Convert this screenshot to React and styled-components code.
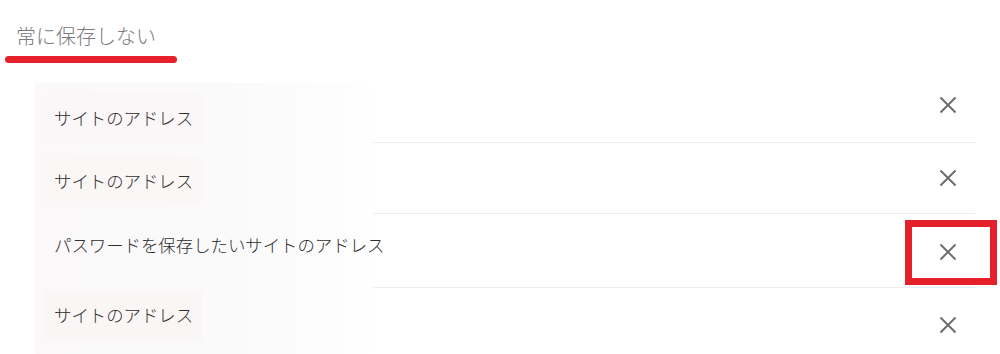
import styled, { createGlobalStyle } from "styled-components";

const GlobalStyle = createGlobalStyle`
  html, body {
    margin: 0;
    padding: 0;
    background: #ffffff;
    overflow: hidden;
  }
  body {
    font-family: "Noto Sans CJK JP", "Noto Sans", sans-serif;
    color: #333333;
  }
`;

const sites = [
  { label: "サイトのアドレス", height: 59, textTop: 10, iconTop: 13, tint: "#fbf7f8" },
  { label: "サイトのアドレス", height: 72, textTop: 14, iconTop: 27, tint: "#fbf7f7" },
  { label: "パスワードを保存したいサイトのアドレス", height: 74, textTop: 6, iconTop: 29, tint: "transparent", highlighted: true },
  { label: "サイトのアドレス", height: 72, textTop: 2, iconTop: 28, tint: "#fbf6f6" },
];

const App = () => {
  return (
    <>
      <GlobalStyle />
      <Page>
        <Header>
          <Title>常に保存しない</Title>
          <Underline />
        </Header>
        <SiteList>
          {sites.map((site, index) => (
            <Row key={index} $height={site.height}>
              <LabelCell>
                <Label $top={site.textTop} $tint={site.tint}>{site.label}</Label>
              </LabelCell>
              <ActionCell $last={index === sites.length - 1}>
                <RemoveButton $top={site.iconTop} $highlighted={site.highlighted} aria-label="削除">
                  <svg width="18" height="18" viewBox="0 0 18 18">
                    <path d="M1.5 1.5 L16.5 16.5 M16.5 1.5 L1.5 16.5" stroke="#6b6b6b" strokeWidth="1.9" strokeLinecap="butt" />
                  </svg>
                </RemoveButton>
              </ActionCell>
            </Row>
          ))}
        </SiteList>
      </Page>
    </>
  );
};

const Page = styled.div`
  width: 1000px;
  height: 354px;
  overflow: hidden;
  padding-top: 22px;
  box-sizing: border-box;
`;

const Header = styled.div`
  padding-left: 5px;
`;

const Title = styled.div`
  padding-left: 11px;
  font-size: 20px;
  line-height: 28px;
  color: #7a7a7a;
  font-weight: 300;
`;

const Underline = styled.div`
  width: 172px;
  height: 7px;
  margin-top: 6px;
  border-radius: 4px;
  background: #e6202b;
`;

const SiteList = styled.div`
  margin-top: 20px;
  margin-left: 35px;
  width: 940px;
  background: linear-gradient(to right, #faf8f9 0px, #fbfafb 200px, #fefefe 330px, #ffffff 338px);
  background-size: 338px 100%;
  background-repeat: no-repeat;
`;

const Row = styled.div`
  display: grid;
  grid-template-columns: 338px 1fr;
  height: ${props => props.$height}px;
`;

const LabelCell = styled.div`
  display: flex;
  align-items: flex-start;
`;

const Label = styled.div`
  margin-top: ${props => props.$top}px;
  margin-left: 10px;
  padding: 13px 9px;
  font-size: 17.4px;
  line-height: 24px;
  font-weight: 300;
  white-space: nowrap;
  color: #2e2e2e;
  background: ${props => props.$tint};
`;

const ActionCell = styled.div`
  display: flex;
  justify-content: flex-end;
  align-items: flex-start;
  border-bottom: ${props => props.$last ? 'none' : '1.5px solid #ececec'};
  box-sizing: border-box;
`;

const RemoveButton = styled.button`
  position: relative;
  margin-top: ${props => props.$top}px;
  margin-right: 18px;
  width: 18px;
  height: 18px;
  padding: 0;
  border: none;
  background: transparent;
  display: flex;
  svg {
    display: block;
  }
  &:after {
    content: '';
    display: ${props => props.$highlighted ? 'block' : 'none'};
    position: absolute;
    left: -34px;
    top: -23px;
    width: 92px;
    height: 65px;
    box-sizing: border-box;
    border: 7px solid #e6202b;
  }
`;

export default App;
